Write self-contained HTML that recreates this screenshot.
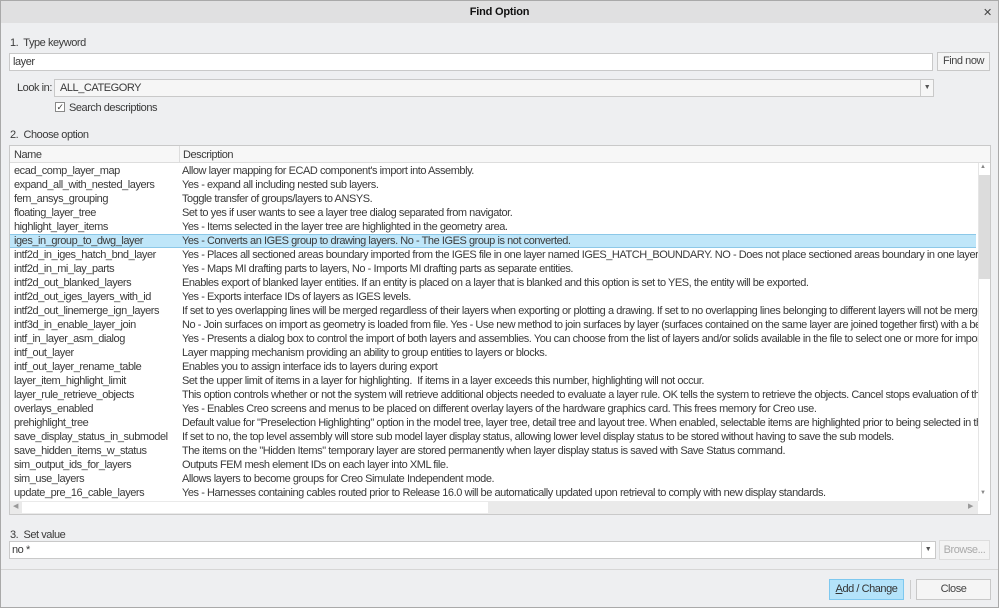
<!DOCTYPE html>
<html><head><meta charset="utf-8"><style>
*{box-sizing:border-box;margin:0;padding:0}
body{width:999px;height:608px;overflow:hidden;background:#eeeff1;font-family:"Liberation Sans",sans-serif;font-size:11px;color:#3a3a3a;position:relative;letter-spacing:-0.45px}
.abs{position:absolute}
.frame{left:0;top:0;width:999px;height:608px;border:1px solid #a9a9a9}
.title{left:1px;top:1px;width:997px;height:22px;background:#e0e0e1;text-align:center;font-weight:bold;line-height:23px;color:#111;font-size:11px;letter-spacing:-0.2px}
.box{background:#fff;border:1px solid #c9c9c9}
.btn{background:#f5f5f5;border:1px solid #c8c8c8;text-align:center;color:#444}
.row{position:absolute;left:0;height:14px;line-height:14px;white-space:nowrap;width:966px}
.row span{position:absolute;left:4px}
.row span+span{left:172px}
</style></head><body>
<div class="abs frame"></div>
<div class="abs title">Find Option</div>
<div class="abs" style="left:983px;top:6px;font-size:11px;color:#444">✕</div>
<div class="abs" style="left:10px;top:37px">1.&nbsp; Type keyword</div>
<div class="abs box" style="left:9px;top:53px;width:924px;height:18px;padding:2px 3px">layer</div>
<div class="abs btn" style="left:937px;top:52px;width:53px;height:19px;line-height:17px">Find now</div>
<div class="abs" style="left:17px;top:82px">Look in:</div>
<div class="abs" style="left:54px;top:79px;width:880px;height:18px;background:#f6f6f6;border:1px solid #c9c9c9;padding:2px 5px">ALL_CATEGORY</div>
<div class="abs" style="left:920px;top:80px;width:13px;height:16px;border-left:1px solid #ccc;font-size:7px;text-align:center;line-height:16px;color:#555">▼</div>
<div class="abs" style="left:55px;top:102px;width:10px;height:10px;border:1px solid #888;background:#fff;font-size:9px;line-height:8px;text-align:center">✓</div>
<div class="abs" style="left:69px;top:102px">Search descriptions</div>
<div class="abs" style="left:10px;top:129px">2.&nbsp; Choose option</div>
<div class="abs" style="left:9px;top:145px;width:982px;height:370px;border:1px solid #c9c9c9;background:#fff;overflow:hidden">
 <div class="abs" style="left:0;top:0;width:980px;height:17px;background:#f7f7f7;border-bottom:1px solid #ddd"></div>
 <div class="abs" style="left:4px;top:3px">Name</div>
 <div class="abs" style="left:169px;top:0;width:1px;height:17px;background:#ddd"></div>
 <div class="abs" style="left:173px;top:3px">Description</div>
 <div class="abs" style="left:0;top:18px;width:968px;height:336px;overflow:hidden">
  <div class="row" style="top:0"><span>ecad_comp_layer_map</span><span>Allow layer mapping for ECAD component's import into Assembly.</span></div>
  <div class="row" style="top:14px"><span>expand_all_with_nested_layers</span><span>Yes - expand all including nested sub layers.</span></div>
  <div class="row" style="top:28px"><span>fem_ansys_grouping</span><span>Toggle transfer of groups/layers to ANSYS.</span></div>
  <div class="row" style="top:42px"><span>floating_layer_tree</span><span>Set to yes if user wants to see a layer tree dialog separated from navigator.</span></div>
  <div class="row" style="top:56px"><span>highlight_layer_items</span><span>Yes - Items selected in the layer tree are highlighted in the geometry area.</span></div>
  <div class="row" style="top:70px;background:#bfe6f9;border-top:1px solid #8cc8e8;border-bottom:1px solid #8cc8e8;line-height:12px"><span>iges_in_group_to_dwg_layer</span><span>Yes - Converts an IGES group to drawing layers. No - The IGES group is not converted.</span></div>
  <div class="row" style="top:84px"><span>intf2d_in_iges_hatch_bnd_layer</span><span>Yes - Places all sectioned areas boundary imported from the IGES file in one layer named IGES_HATCH_BOUNDARY. NO - Does not place sectioned areas boundary in one layer.</span></div>
  <div class="row" style="top:98px"><span>intf2d_in_mi_lay_parts</span><span>Yes - Maps MI drafting parts to layers, No - Imports MI drafting parts as separate entities.</span></div>
  <div class="row" style="top:112px"><span>intf2d_out_blanked_layers</span><span>Enables export of blanked layer entities. If an entity is placed on a layer that is blanked and this option is set to YES, the entity will be exported.</span></div>
  <div class="row" style="top:126px"><span>intf2d_out_iges_layers_with_id</span><span>Yes - Exports interface IDs of layers as IGES levels.</span></div>
  <div class="row" style="top:140px"><span>intf2d_out_linemerge_ign_layers</span><span>If set to yes overlapping lines will be merged regardless of their layers when exporting or plotting a drawing. If set to no overlapping lines belonging to different layers will not be merged.</span></div>
  <div class="row" style="top:154px"><span>intf3d_in_enable_layer_join</span><span>No - Join surfaces on import as geometry is loaded from file. Yes - Use new method to join surfaces by layer (surfaces contained on the same layer are joined together first) with a better chance</span></div>
  <div class="row" style="top:168px"><span>intf_in_layer_asm_dialog</span><span>Yes - Presents a dialog box to control the import of both layers and assemblies. You can choose from the list of layers and/or solids available in the file to select one or more for import.</span></div>
  <div class="row" style="top:182px"><span>intf_out_layer</span><span>Layer mapping mechanism providing an ability to group entities to layers or blocks.</span></div>
  <div class="row" style="top:196px"><span>intf_out_layer_rename_table</span><span>Enables you to assign interface ids to layers during export</span></div>
  <div class="row" style="top:210px"><span>layer_item_highlight_limit</span><span>Set the upper limit of items in a layer for highlighting.&nbsp; If items in a layer exceeds this number, highlighting will not occur.</span></div>
  <div class="row" style="top:224px"><span>layer_rule_retrieve_objects</span><span>This option controls whether or not the system will retrieve additional objects needed to evaluate a layer rule. OK tells the system to retrieve the objects. Cancel stops evaluation of the rule.</span></div>
  <div class="row" style="top:238px"><span>overlays_enabled</span><span>Yes - Enables Creo screens and menus to be placed on different overlay layers of the hardware graphics card. This frees memory for Creo use.</span></div>
  <div class="row" style="top:252px"><span>prehighlight_tree</span><span>Default value for "Preselection Highlighting" option in the model tree, layer tree, detail tree and layout tree. When enabled, selectable items are highlighted prior to being selected in the tree.</span></div>
  <div class="row" style="top:266px"><span>save_display_status_in_submodel</span><span>If set to no, the top level assembly will store sub model layer display status, allowing lower level display status to be stored without having to save the sub models.</span></div>
  <div class="row" style="top:280px"><span>save_hidden_items_w_status</span><span>The items on the "Hidden Items" temporary layer are stored permanently when layer display status is saved with Save Status command.</span></div>
  <div class="row" style="top:294px"><span>sim_output_ids_for_layers</span><span>Outputs FEM mesh element IDs on each layer into XML file.</span></div>
  <div class="row" style="top:308px"><span>sim_use_layers</span><span>Allows layers to become groups for Creo Simulate Independent mode.</span></div>
  <div class="row" style="top:322px"><span>update_pre_16_cable_layers</span><span>Yes - Harnesses containing cables routed prior to Release 16.0 will be automatically updated upon retrieval to comply with new display standards.</span></div>
 </div>
 <div class="abs" style="left:968px;top:17px;width:13px;height:338px;background:#fff;border-left:1px solid #e5e5e5"></div>
 <div class="abs" style="left:969px;top:29px;width:11px;height:104px;background:#dcdcdc"></div>
 <div class="abs" style="left:970px;top:18px;font-size:6px;color:#888">▲</div>
 <div class="abs" style="left:970px;top:344px;font-size:6px;color:#888">▼</div>
 <div class="abs" style="left:0;top:355px;width:968px;height:13px;background:#eaeaea"></div>
 <div class="abs" style="left:12px;top:356px;width:466px;height:11px;background:#fff"></div>
 <div class="abs" style="left:3px;top:356px;font-size:7px;color:#999">◀</div>
 <div class="abs" style="left:958px;top:356px;font-size:7px;color:#999">▶</div>
</div>
<div class="abs" style="left:10px;top:529px">3.&nbsp; Set value</div>
<div class="abs box" style="left:9px;top:541px;width:927px;height:18px;padding:2px 2px">no *</div>
<div class="abs" style="left:921px;top:542px;width:13px;height:16px;border-left:1px solid #ccc;font-size:7px;text-align:center;line-height:16px;color:#555">▼</div>
<div class="abs btn" style="left:939px;top:540px;width:51px;height:20px;line-height:18px;color:#aaa;background:#f3f3f3;border-color:#ddd">Browse...</div>
<div class="abs" style="left:1px;top:569px;width:997px;height:1px;background:#d6d6d6"></div>
<div class="abs btn" style="left:829px;top:579px;width:75px;height:21px;line-height:19px;background:#b4e3fa;border-color:#7ec8ef;color:#333"><u>A</u>dd / Change</div>
<div class="abs" style="left:910px;top:580px;width:1px;height:19px;background:#ccc"></div>
<div class="abs btn" style="left:916px;top:579px;width:75px;height:21px;line-height:19px">Close</div>
</body></html>
